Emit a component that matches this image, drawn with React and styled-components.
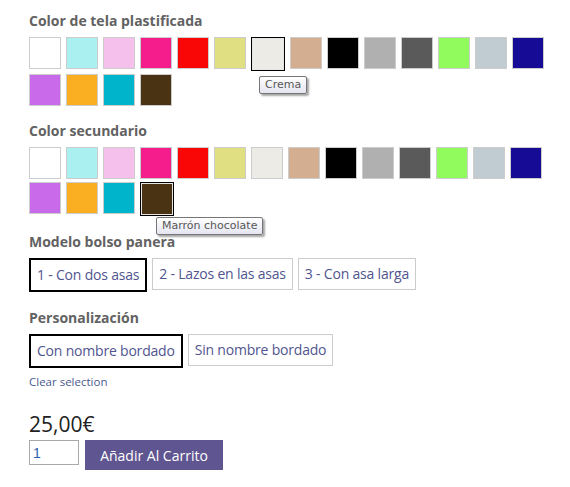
import { createGlobalStyle } from 'styled-components';
import styled from 'styled-components';

const GlobalStyle = createGlobalStyle`
  body {
    margin: 0;
    background: #fff;
    font-family: 'Open Sans', sans-serif;
  }
`;

const Page = styled.div`
  padding: 11px 0 0 29px;
`;

const Section = styled.div`
  margin-bottom: ${(p) => p.$gap || 16}px;
`;

const Heading = styled.div`
  font-size: 14px;
  line-height: 20px;
  font-weight: 700;
  color: #626262;
  margin-bottom: 6px;
`;

const Swatches = styled.div`
  display: flex;
  flex-wrap: wrap;
  align-items: flex-start;
  gap: 3px 5px;
  width: 520px;
`;

const SwatchWrap = styled.div`
  position: relative;
`;

const Swatch = styled.div`
  box-sizing: border-box;
  width: ${(p) => (p.$selected ? 34 : 32)}px;
  height: ${(p) => (p.$selected ? 34 : 32)}px;
  background: ${(p) => p.$color};
  border: 1px solid ${(p) => (p.$selected ? '#000' : '#cccccc')};
  box-shadow: ${(p) => (p.$selected ? 'inset 0 0 0 1px #e6e6e6' : 'none')};
`;

const Tooltip = styled.div`
  position: absolute;
  z-index: 2;
  white-space: nowrap;
  font-family: 'DejaVu Sans', sans-serif;
  font-size: 11px;
  line-height: 16px;
  color: #575757;
  padding: 0 5px;
  border: 1px solid #767676;
  border-radius: 2px;
  background: linear-gradient(#ffffff, #e4e5f0);
  box-shadow: 2px 2px 2px rgba(0, 0, 0, 0.35);
`;

const Options = styled.div`
  display: flex;
  align-items: flex-start;
  gap: 5px;
`;

const Option = styled.div`
  box-sizing: border-box;
  height: ${(p) => (p.$selected ? 34 : 32)}px;
  padding: 0 6px;
  border: ${(p) => (p.$selected ? '2px solid #000' : '1px solid #cccccc')};
  font-size: 14px;
  letter-spacing: -0.2px;
  line-height: 30px;
  color: #51558f;
  white-space: nowrap;
`;

const ClearLink = styled.a`
  display: block;
  margin-top: 6px;
  font-size: 11.5px;
  line-height: 16px;
  color: #4b5a8e;
  text-decoration: none;
`;

const Price = styled.div`
  font-size: 21px;
  line-height: 28px;
  color: #222;
  margin-bottom: 2px;
`;

const CartRow = styled.div`
  display: flex;
  align-items: flex-start;
  gap: 6px;
`;

const Qty = styled.input`
  box-sizing: border-box;
  width: 50px;
  height: 25px;
  border: 1px solid #aaaaaa;
  padding: 0 3px;
  font-family: 'Liberation Sans', sans-serif;
  font-size: 14px;
  color: #2b5fae;
  outline: none;
`;

const AddButton = styled.button`
  box-sizing: border-box;
  width: 138px;
  height: 30px;
  border: none;
  background: #5f5590;
  color: #fff;
  font-family: 'Open Sans', sans-serif;
  font-size: 14px;
  padding: 0;
`;

const colors = [
  { c: '#ffffff', n: 'Blanco' },
  { c: '#aaf0f0', n: 'Celeste' },
  { c: '#f5c0ec', n: 'Rosa claro' },
  { c: '#f51c8c', n: 'Fucsia' },
  { c: '#f90606', n: 'Rojo' },
  { c: '#e0e083', n: 'Pistacho' },
  { c: '#ecebe6', n: 'Crema' },
  { c: '#d4ae91', n: 'Beige' },
  { c: '#000000', n: 'Negro' },
  { c: '#b0b0b0', n: 'Gris claro' },
  { c: '#5a5a5a', n: 'Gris oscuro' },
  { c: '#91fb5d', n: 'Verde' },
  { c: '#c1ccd2', n: 'Gris azulado' },
  { c: '#150b95', n: 'Azul marino' },
  { c: '#c86ae9', n: 'Lila' },
  { c: '#faaf22', n: 'Naranja' },
  { c: '#00b4cc', n: 'Turquesa' },
  { c: '#4a3313', n: 'Marrón chocolate' },
];

const SwatchGroup = ({ selected, tip }) => (
  <Swatches>
    {colors.map((col) => (
      <SwatchWrap key={col.n}>
        <Swatch $color={col.c} $selected={col.n === selected} />
        {col.n === selected && tip && (
          <Tooltip style={{ left: tip.x, top: tip.y }}>{col.n}</Tooltip>
        )}
      </SwatchWrap>
    ))}
  </Swatches>
);

export default function App() {
  return (
    <Page>
      <GlobalStyle />
      <Section $gap={15}>
        <Heading>Color de tela plastificada</Heading>
        <SwatchGroup selected="Crema" tip={{ x: 8, y: 39 }} />
      </Section>
      <Section $gap={16}>
        <Heading>Color secundario</Heading>
        <SwatchGroup selected="Marrón chocolate" tip={{ x: 16, y: 35 }} />
      </Section>
      <Section $gap={16}>
        <Heading>Modelo bolso panera</Heading>
        <Options>
          <Option $selected>1 - Con dos asas</Option>
          <Option>2 - Lazos en las asas</Option>
          <Option>3 - Con asa larga</Option>
        </Options>
      </Section>
      <Section $gap={20}>
        <Heading>Personalización</Heading>
        <Options>
          <Option $selected>Con nombre bordado</Option>
          <Option>Sin nombre bordado</Option>
        </Options>
        <ClearLink href="#">Clear selection</ClearLink>
      </Section>
      <Price>25,00€</Price>
      <CartRow>
        <Qty defaultValue="1" />
        <AddButton>Añadir Al Carrito</AddButton>
      </CartRow>
    </Page>
  );
}
